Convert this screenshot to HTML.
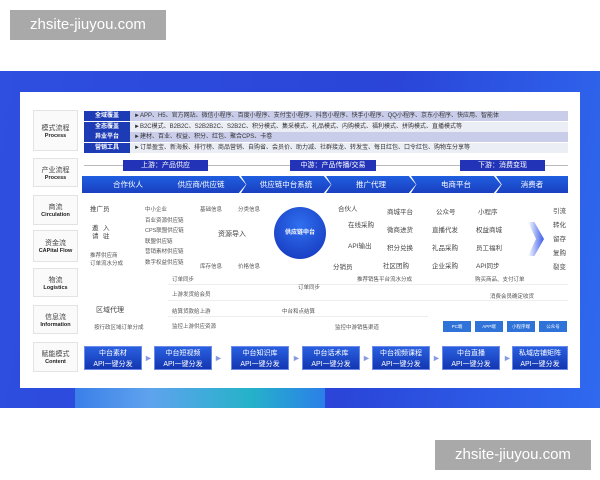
<!DOCTYPE html>
<html><head><meta charset="utf-8"><style>
*{margin:0;padding:0;box-sizing:border-box}
body{width:600px;height:480px;background:#fff;position:relative;overflow:hidden;font-family:"Liberation Sans","Noto Sans CJK SC",sans-serif;color:#333}
div{position:absolute}
.wm{background:#a9a9a9;color:#fff;font-size:15px;line-height:30px;text-align:center;width:156px;height:30px}
.lab{left:33px;width:45px;background:#fafafa;border:1px solid #e3e3e3;text-align:center;font-size:7px;color:#444;display:flex;flex-direction:column;justify-content:center}
.lab b{font-size:5.5px;color:#222}
.row{left:84px;width:484px;height:10px;font-size:6px;line-height:10px;color:#333;white-space:nowrap;overflow:hidden}
.row span{display:inline-block;width:46px;background:#1d3bb5;color:#fff;text-align:center;margin-right:4px;font-weight:bold}
.bar{height:11px;background:#2233b8;color:#fff;font-size:7px;text-align:center;line-height:11px}
.chev{top:176px;height:17px;background:linear-gradient(#1f5fe0,#1a3fc0);color:#fff;font-size:7.5px;text-align:center;line-height:17px;clip-path:polygon(0 0,92% 0,100% 50%,92% 100%,0 100%,6% 50%)}
.t{font-size:6.5px;color:#444;white-space:nowrap}
.s{font-size:5.5px;color:#555;white-space:nowrap}
.btn{top:346px;width:58px;height:24px;background:linear-gradient(#2a60e0,#1436b0);color:#fff;font-size:7px;text-align:center;line-height:11px;padding-top:1px;border:1px solid #6c8ae8}
.ar{top:353px;color:#8a9ae0;font-size:9px}
.sm{top:321px;width:28px;height:11px;background:#2f72d8;color:#fff;font-size:4.5px;text-align:center;line-height:11px}
</style></head><body>
<div class="wm" style="left:10px;top:10px">zhsite-jiuyou.com</div>
<div class="wm" style="left:435px;top:440px">zhsite-jiuyou.com</div>
<div style="left:0;top:71px;width:600px;height:337px;background:linear-gradient(100deg,#2e4fe0,#2a45d8 60%,#2f6af0)"></div>
<div style="left:75px;top:388px;width:250px;height:20px;background:linear-gradient(90deg,#3a7fe8,#5fa3ee 30%,#25b2c9 70%,#2b7fe8)"></div>
<div style="left:20px;top:92px;width:560px;height:296px;background:#fff"></div>

<div class="lab" style="top:110px;height:41px">模式流程<b>Process</b></div>
<div class="lab" style="top:158px;height:29px">产业流程<b>Process</b></div>
<div class="lab" style="top:195px;height:30px">商流<b>Circulation</b></div>
<div class="lab" style="top:230px;height:32px">资金流<b>CAPital Flow</b></div>
<div class="lab" style="top:268px;height:29px">物流<b>Logistics</b></div>
<div class="lab" style="top:305px;height:29px">信息流<b>Information</b></div>
<div class="lab" style="top:342px;height:30px">赋能模式<b>Content</b></div>

<div class="row" style="top:111px;background:#c9cdea"><span>全域覆盖</span>►APP、H5、官方网站、微信小程序、百度小程序、支付宝小程序、抖音小程序、快手小程序、QQ小程序、京东小程序、快应用、智能体</div>
<div class="row" style="top:122px;background:#eceef6"><span>全态覆盖</span>►B2C模式、B2B2C、S2B2B2C、S2B2C、积分模式、集采模式、礼品模式、内购模式、福利模式、拼购模式、直播模式等</div>
<div class="row" style="top:132px;background:#c9cdea"><span>异业平台</span>►建材、百业、权益、积分、红包、聚合CPS、卡卷</div>
<div class="row" style="top:143px;background:#eceef6"><span>营销工具</span>►订单盈宝、新海报、排行榜、商品营销、自购省、会员价、助力减、社群接龙、转发宝、每日红包、口令红包、购物车分享等</div>

<div style="left:84px;top:165px;width:484px;height:1px;background:#bbb"></div>
<div class="bar" style="left:123px;top:160px;width:85px">上游：产品供应</div>
<div class="bar" style="left:290px;top:160px;width:86px">中游：产品传播/交易</div>
<div class="bar" style="left:460px;top:160px;width:85px">下游：消费变现</div>

<div class="chev" style="left:82px;width:92px;clip-path:polygon(0 0,92% 0,100% 50%,92% 100%,0 100%)">合作伙人</div>
<div class="chev" style="left:156px;width:90px">供应商/供应链</div>
<div class="chev" style="left:241px;width:90px">供应链中台系统</div>
<div class="chev" style="left:326px;width:90px">推广代理</div>
<div class="chev" style="left:411px;width:90px">电商平台</div>
<div class="chev" style="left:496px;width:72px;clip-path:polygon(0 0,100% 0,100% 100%,0 100%,8% 50%)">消费者</div>

<div class="t" style="left:90px;top:203px">推广员</div>
<div class="t" style="left:92px;top:225px;width:8px;white-space:normal;line-height:8px">邀请</div>
<div class="t" style="left:103px;top:225px;width:8px;white-space:normal;line-height:8px">入驻</div>
<div class="s" style="left:90px;top:252px;line-height:8px">推荐供应商<br>订单流水分成</div>
<div class="s" style="left:145px;top:205px;line-height:10.5px">中小企业<br>百业资源供应链<br>CPS联盟供应链<br>联盟供应链<br>营销素材供应链<br>数字权益供应链</div>
<div class="s" style="left:200px;top:205px">基础信息</div>
<div class="s" style="left:238px;top:205px">分类信息</div>
<div class="t" style="left:218px;top:229px;font-size:7px">资源导入</div>
<div class="s" style="left:200px;top:262px">库存信息</div>
<div class="s" style="left:238px;top:262px">价格信息</div>
<div style="left:274px;top:207px;width:52px;height:52px;border-radius:50%;background:radial-gradient(circle at 50% 35%,#2f6ff0,#1433b8);color:#fff;font-size:6px;text-align:center;line-height:52px;font-weight:bold">供应链中台</div>

<div class="t" style="left:338px;top:203px">合伙人</div>
<div class="t" style="left:348px;top:219px">在线采购</div>
<div class="t" style="left:348px;top:240px">API输出</div>
<div class="t" style="left:333px;top:261px">分销员</div>
<div class="t" style="left:387px;top:206px">商城平台</div><div class="t" style="left:436px;top:206px">公众号</div><div class="t" style="left:478px;top:206px">小程序</div>
<div class="t" style="left:387px;top:224px">微商进货</div><div class="t" style="left:432px;top:224px">直播代发</div><div class="t" style="left:476px;top:224px">权益商城</div>
<div class="t" style="left:387px;top:242px">积分兑换</div><div class="t" style="left:432px;top:242px">礼品采购</div><div class="t" style="left:476px;top:242px">员工福利</div>
<div class="t" style="left:383px;top:260px">社区团购</div><div class="t" style="left:432px;top:260px">企业采购</div><div class="t" style="left:476px;top:260px">API同步</div>
<div style="left:528px;top:222px;width:16px;height:34px;background:linear-gradient(90deg,#fff,#3a5be8);clip-path:polygon(0 0,40% 0,100% 50%,40% 100%,0 100%,50% 50%)"></div>
<div class="t" style="left:553px;top:205px;line-height:14px">引流<br>转化<br>留存<br>复购<br>裂变</div>

<div class="s" style="left:172px;top:275px">订单同步</div>
<div class="s" style="left:172px;top:290px">上游发货给会员</div>
<div class="s" style="left:172px;top:307px">结算货款给上游</div>
<div class="s" style="left:172px;top:322px">监控上游供应资源</div>
<div style="left:168px;top:284px;width:400px;height:1px;background:#eee"></div>
<div style="left:168px;top:300px;width:400px;height:1px;background:#eee"></div>
<div style="left:168px;top:316px;width:260px;height:1px;background:#eee"></div>
<div class="t" style="left:96px;top:305px;font-size:7px">区域代理</div>
<div class="s" style="left:94px;top:323px">按行政区域订单分成</div>
<div class="s" style="left:298px;top:283px">订单同步</div>
<div class="s" style="left:282px;top:307px">中台和点结算</div>
<div class="s" style="left:335px;top:323px">监控中游销售渠道</div>
<div class="s" style="left:357px;top:275px">推荐销售平台流水分成</div>
<div class="s" style="left:475px;top:275px">购买商品、支付订单</div>
<div class="s" style="left:490px;top:292px">消费会员确定收货</div>
<div class="sm" style="left:443px">PC端</div><div class="sm" style="left:475px">APP端</div><div class="sm" style="left:507px">小程序端</div><div class="sm" style="left:539px">公众号</div>

<div class="btn" style="left:84px">中台素材<br>API一键分发</div>
<div class="ar" style="left:144px">►</div>
<div class="btn" style="left:154px">中台短视频<br>API一键分发</div>
<div class="ar" style="left:214px">►</div>
<div class="btn" style="left:231px">中台知识库<br>API一键分发</div>
<div class="ar" style="left:292px">►</div>
<div class="btn" style="left:302px">中台话术库<br>API一键分发</div>
<div class="ar" style="left:362px">►</div>
<div class="btn" style="left:372px">中台视频课程<br>API一键分发</div>
<div class="ar" style="left:432px">►</div>
<div class="btn" style="left:442px">中台直播<br>API一键分发</div>
<div class="ar" style="left:503px">►</div>
<div class="btn" style="left:512px;width:56px">私域店铺矩阵<br>API一键分发</div>
</body></html>
